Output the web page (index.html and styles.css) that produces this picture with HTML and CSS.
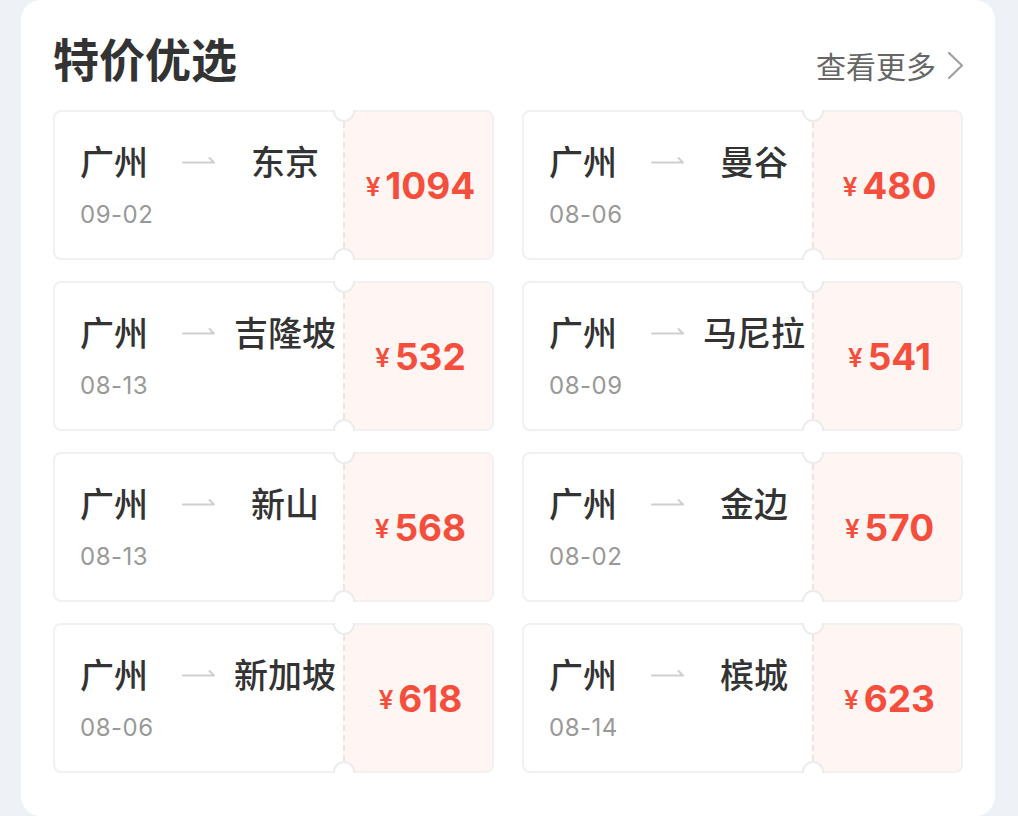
FILE: index.html
```html
<!DOCTYPE html>
<html lang="zh-CN">
<head>
<meta charset="utf-8">
<link rel="stylesheet" href="styles.css">
</head>
<body>
<div class="panel">
  <div class="head">
    <h2 class="title">特价优选</h2>
    <a class="more">查看更多<svg class="chev" width="18" height="30" viewBox="0 0 18 30"><polyline points="3,3 16,15.5 3,28" fill="none" stroke="#a0a0a0" stroke-width="2.2" stroke-linecap="round" stroke-linejoin="round"/></svg></a>
  </div>
  <div class="grid">
    <div class="card">
      <div class="info">
        <div class="route"><span class="from">广州</span><svg class="arrow" width="34" height="12" viewBox="0 0 34 12"><path d="M1 9.5 H32 L27.5 5" fill="none" stroke="#cfcfcf" stroke-width="2" stroke-linecap="round" stroke-linejoin="round"/></svg><span class="to">东京</span></div>
        <div class="date">09-02</div>
      </div>
      <div class="price"><span class="yen">¥</span><span class="num">1094</span></div>
      <i class="notch top"></i><i class="notch bottom"></i>
    </div>
    <div class="card">
      <div class="info">
        <div class="route"><span class="from">广州</span><svg class="arrow" width="34" height="12" viewBox="0 0 34 12"><path d="M1 9.5 H32 L27.5 5" fill="none" stroke="#cfcfcf" stroke-width="2" stroke-linecap="round" stroke-linejoin="round"/></svg><span class="to">曼谷</span></div>
        <div class="date">08-06</div>
      </div>
      <div class="price"><span class="yen">¥</span><span class="num">480</span></div>
      <i class="notch top"></i><i class="notch bottom"></i>
    </div>
    <div class="card">
      <div class="info">
        <div class="route"><span class="from">广州</span><svg class="arrow" width="34" height="12" viewBox="0 0 34 12"><path d="M1 9.5 H32 L27.5 5" fill="none" stroke="#cfcfcf" stroke-width="2" stroke-linecap="round" stroke-linejoin="round"/></svg><span class="to">吉隆坡</span></div>
        <div class="date">08-13</div>
      </div>
      <div class="price"><span class="yen">¥</span><span class="num">532</span></div>
      <i class="notch top"></i><i class="notch bottom"></i>
    </div>
    <div class="card">
      <div class="info">
        <div class="route"><span class="from">广州</span><svg class="arrow" width="34" height="12" viewBox="0 0 34 12"><path d="M1 9.5 H32 L27.5 5" fill="none" stroke="#cfcfcf" stroke-width="2" stroke-linecap="round" stroke-linejoin="round"/></svg><span class="to">马尼拉</span></div>
        <div class="date">08-09</div>
      </div>
      <div class="price"><span class="yen">¥</span><span class="num">541</span></div>
      <i class="notch top"></i><i class="notch bottom"></i>
    </div>
    <div class="card">
      <div class="info">
        <div class="route"><span class="from">广州</span><svg class="arrow" width="34" height="12" viewBox="0 0 34 12"><path d="M1 9.5 H32 L27.5 5" fill="none" stroke="#cfcfcf" stroke-width="2" stroke-linecap="round" stroke-linejoin="round"/></svg><span class="to">新山</span></div>
        <div class="date">08-13</div>
      </div>
      <div class="price"><span class="yen">¥</span><span class="num">568</span></div>
      <i class="notch top"></i><i class="notch bottom"></i>
    </div>
    <div class="card">
      <div class="info">
        <div class="route"><span class="from">广州</span><svg class="arrow" width="34" height="12" viewBox="0 0 34 12"><path d="M1 9.5 H32 L27.5 5" fill="none" stroke="#cfcfcf" stroke-width="2" stroke-linecap="round" stroke-linejoin="round"/></svg><span class="to">金边</span></div>
        <div class="date">08-02</div>
      </div>
      <div class="price"><span class="yen">¥</span><span class="num">570</span></div>
      <i class="notch top"></i><i class="notch bottom"></i>
    </div>
    <div class="card">
      <div class="info">
        <div class="route"><span class="from">广州</span><svg class="arrow" width="34" height="12" viewBox="0 0 34 12"><path d="M1 9.5 H32 L27.5 5" fill="none" stroke="#cfcfcf" stroke-width="2" stroke-linecap="round" stroke-linejoin="round"/></svg><span class="to">新加坡</span></div>
        <div class="date">08-06</div>
      </div>
      <div class="price"><span class="yen">¥</span><span class="num">618</span></div>
      <i class="notch top"></i><i class="notch bottom"></i>
    </div>
    <div class="card">
      <div class="info">
        <div class="route"><span class="from">广州</span><svg class="arrow" width="34" height="12" viewBox="0 0 34 12"><path d="M1 9.5 H32 L27.5 5" fill="none" stroke="#cfcfcf" stroke-width="2" stroke-linecap="round" stroke-linejoin="round"/></svg><span class="to">槟城</span></div>
        <div class="date">08-14</div>
      </div>
      <div class="price"><span class="yen">¥</span><span class="num">623</span></div>
      <i class="notch top"></i><i class="notch bottom"></i>
    </div>
  </div>
</div>
</body>
</html>
```

FILE: styles.css
```css
html, body {
  margin: 0;
  padding: 0;
  background: #eef1f6;
}
body {
  font-family: "Noto Sans CJK SC", "Noto Sans", sans-serif;
  width: 1018px;
  height: 816px;
  overflow: hidden;
}
.panel {
  margin: 0 23px 0 21px;
  background: #fff;
  border-radius: 20px;
  height: 816px;
  box-sizing: border-box;
  padding: 0 32px 0 32px;
}
.head {
  display: flex;
  justify-content: space-between;
  align-items: flex-start;
  height: 82px;
  box-sizing: border-box;
  padding-top: 27px;
  margin-bottom: 28px;
}
.title {
  margin: 0;
  font-size: 46px;
  line-height: 60px;
  font-weight: 700;
  color: #333;
}
.more {
  display: flex;
  align-items: center;
  margin-top: 18px;
  font-size: 30px;
  line-height: 40px;
  color: #666;
  margin-right: -1px;
}
.chev {
  margin-left: 10px;
}
.grid {
  display: grid;
  grid-template-columns: 441px 441px;
  column-gap: 28px;
  row-gap: 21px;
}
.card {
  position: relative;
  display: flex;
  height: 150px;
  box-sizing: border-box;
  border: 2px solid #f1f1f1;
  border-radius: 8px;
}
.info {
  width: 288px;
  box-sizing: border-box;
  padding: 26px 0 0 25px;
}
.route {
  display: flex;
  align-items: center;
  height: 46px;
}
.from, .to {
  font-size: 34px;
  line-height: 46px;
  font-weight: 500;
  color: #333;
}
.from {
  width: 70px;
}
.arrow {
  margin-left: 32px;
  margin-top: -4px;
}
.to {
  width: 106px;
  margin-left: 16px;
  text-align: center;
}
.date {
  font-family: Inter, "Noto Sans", sans-serif;
  font-size: 24px;
  line-height: 30px;
  color: #999;
  margin-top: 16px;
  letter-spacing: 0.5px;
}
.price {
  flex: 1;
  display: flex;
  align-items: center;
  justify-content: center;
  background: #fff5f3;
  border-left: 2px dashed #f0e4e2;
  border-radius: 0 6px 6px 0;
  color: #f54e3c;
  font-family: Inter, "Noto Sans", sans-serif;
  font-weight: 700;
  padding-left: 4px;
}
.yen {
  font-size: 26px;
  font-weight: 600;
  margin-right: 5px;
  margin-top: 3px;
}
.num {
  font-size: 37px;
}
.notch {
  position: absolute;
  left: 278px;
  width: 22px;
  height: 12px;
  box-sizing: border-box;
  background: #fff;
  border: 2px solid #ececec;
}
.notch.top {
  top: -2px;
  border-top: none;
  border-radius: 0 0 11px 11px;
}
.notch.bottom {
  bottom: -2px;
  border-bottom: none;
  border-radius: 11px 11px 0 0;
}
```
